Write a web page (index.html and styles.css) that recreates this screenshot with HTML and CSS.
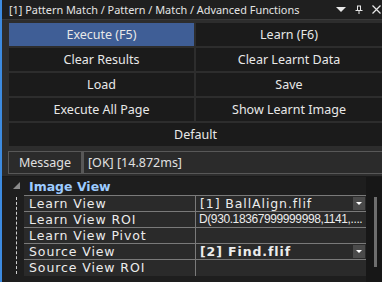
FILE: index.html
```html
<!DOCTYPE html>
<html lang="en">
<head>
    <meta charset="UTF-8">
    <title>Pattern Match</title>
    <link rel="stylesheet" href="styles.css">
</head>
<body>
    <div class="frame">
        <div class="titlebar">
            <span class="title">[1] Pattern Match / Pattern / Match / Advanced Functions</span>
            <div class="title-icons">
                <svg width="10" height="6" viewBox="0 0 10 6"><path d="M0 0 L10 0 L5 5 Z" fill="#e8e8e8"/></svg>
                <svg width="8" height="9" viewBox="0 0 8 9"><path d="M2 0.5 H6 V5 H7.5 V6 H4.5 V9 H3.5 V6 H0.5 V5 H2 Z M3 1.5 V5 H5 V1.5 Z" fill="#e8e8e8"/></svg>
                <svg width="9" height="9" viewBox="0 0 9 9"><path d="M0.5 0.5 L8.5 8.5 M8.5 0.5 L0.5 8.5" stroke="#e8e8e8" stroke-width="1.2"/></svg>
            </div>
        </div>

        <div class="buttons">
            <button class="btn active">Execute (F5)</button>
            <button class="btn">Learn (F6)</button>
            <button class="btn">Clear Results</button>
            <button class="btn">Clear Learnt Data</button>
            <button class="btn">Load</button>
            <button class="btn">Save</button>
            <button class="btn">Execute All Page</button>
            <button class="btn">Show Learnt Image</button>
            <button class="btn wide">Default</button>
        </div>

        <div class="message">
            <div class="msg-label">Message</div>
            <div class="msg-value">[OK] [14.872ms]</div>
        </div>

        <div class="grid-area">
            <div class="props">
                <div class="category">
                    <span class="tri"></span>
                    <span class="cat-name">Image View</span>
                </div>
                <div class="rows">
                    <div class="tree-line"></div>
                    <div class="table">
                        <div class="row">
                            <div class="name">Learn View</div>
                            <div class="value"><span class="val-text">[1] BallAlign.flif</span><span class="drop"></span></div>
                        </div>
                        <div class="row">
                            <div class="name">Learn View ROI</div>
                            <div class="value"><span class="val-text narrow">D(930.18367999999998,1141,....</span></div>
                        </div>
                        <div class="row">
                            <div class="name">Learn View Pivot</div>
                            <div class="value"></div>
                        </div>
                        <div class="row">
                            <div class="name">Source View</div>
                            <div class="value bold"><span class="val-text">[2] Find.flif</span><span class="drop"></span></div>
                        </div>
                        <div class="row">
                            <div class="name">Source View ROI</div>
                            <div class="value"></div>
                        </div>
                    </div>
                </div>
                <div class="category next">
                    <span class="tri"></span>
                    <span class="cat-name">Parameters</span>
                </div>
            </div>
            <div class="scrollbar">
                <div class="thumb"></div>
            </div>
        </div>
    </div>
</body>
</html>
```

FILE: styles.css
```css
/* Pattern match panel */
body {
    margin: 0;
    background-color: #2d2d2d;
    font-family: 'Noto Sans', sans-serif;
    overflow: hidden;
}

.frame {
    width: 380px;
    height: 282px;
    border-left: 2px solid #3d8be0;
    background-color: #2d2d2d;
    overflow: hidden;
}

.titlebar {
    height: 20px;
    background-color: #1f1f1f;
    border-bottom: 1px solid #3a3a3a;
    display: flex;
    align-items: center;
    justify-content: space-between;
    padding-left: 7px;
    box-sizing: border-box;
}

.title {
    color: #e4e4e4;
    font-size: 10.9px;
}

.title-icons {
    display: flex;
    align-items: center;
    gap: 9px;
    padding-right: 1px;
}

.buttons {
    display: grid;
    grid-template-columns: 185px 1fr;
    gap: 2px;
    margin: 3px 0 0 7px;
}

.btn {
    height: 23px;
    border: none;
    margin: 0;
    padding: 0;
    background-color: #1b1b1b;
    color: #e8e8e8;
    font-family: 'Noto Sans', sans-serif;
    font-size: 12.5px;
}

.btn.active {
    background-color: #3f5e96;
}

.btn.wide {
    grid-column: 1 / 3;
}

.message {
    display: flex;
    height: 23px;
    margin: 5px 0 0 6px;
    color: #e0e0e0;
    font-size: 12.5px;
}

.msg-label {
    width: 74px;
    border: 1px solid #585858;
    background-color: #2b2b2b;
    display: flex;
    align-items: center;
    justify-content: center;
    box-sizing: border-box;
}

.msg-value {
    flex: 1;
    border: 1px solid #585858;
    border-right: none;
    border-left-width: 2px;
    background-color: #2b2b2b;
    display: flex;
    align-items: center;
    padding-left: 4px;
    box-sizing: border-box;
}

.grid-area {
    display: flex;
    margin-top: 2px;
    border-top: 1px solid #1a1a1a;
    background-color: #1e1e1e;
    height: 120px;
}

.props {
    width: 364px;
    flex-shrink: 0;
    font-family: 'DejaVu Sans', sans-serif;
}

.category {
    height: 18px;
    display: flex;
    align-items: center;
    position: relative;
}

.cat-name {
    margin-left: 27px;
    color: #9ccbff;
    font-weight: bold;
    font-size: 12.5px;
}

.tri {
    position: absolute;
    left: 11px;
    top: 5px;
    width: 0;
    height: 0;
    border-left: 7px solid transparent;
    border-bottom: 7px solid #8a8a8a;
}

.category.next {
    margin-top: 2px;
}

.rows {
    display: flex;
}

.tree-line {
    width: 22px;
    flex-shrink: 0;
    position: relative;
}

.tree-line::before {
    content: '';
    position: absolute;
    left: 14px;
    top: 2px;
    bottom: 2px;
    border-left: 1px dashed #cfcfcf;
}

.table {
    flex: 1;
    min-width: 0;
    border-top: 1px solid #7a7a7a;
}

.row {
    display: flex;
    height: 15px;
    border-bottom: 1px solid #7a7a7a;
    background-color: #2a2a2a;
    color: #ececec;
    font-size: 12.5px;
    line-height: 15px;
    letter-spacing: 0.9px;
}

.row:last-child {
    border-bottom: none;
    height: 16px;
}

.name {
    width: 172px;
    flex-shrink: 0;
    padding-left: 5px;
    border-right: 1px solid #7a7a7a;
    box-sizing: border-box;
}

.value {
    flex: 1;
    min-width: 0;
    padding-left: 4px;
    position: relative;
    display: flex;
}

.val-text {
    white-space: nowrap;
    overflow: hidden;
}

.val-text.narrow {
    font-family: 'Liberation Sans', sans-serif;
    font-size: 12px;
    letter-spacing: -0.4px;
    margin-left: -1px;
}

.value.bold {
    font-weight: bold;
}

.drop {
    position: absolute;
    right: 1px;
    top: 1px;
    width: 12px;
    height: 13px;
    background-color: #4a4a4a;
}

.drop::after {
    content: '';
    position: absolute;
    left: 3px;
    top: 5px;
    border-left: 3px solid transparent;
    border-right: 3px solid transparent;
    border-top: 3px solid #ffffff;
}

.scrollbar {
    flex: 1;
    background-color: #171717;
    position: relative;
}

.thumb {
    position: absolute;
    left: 8px;
    top: 20px;
    width: 3px;
    height: 70px;
    background-color: #6e6e6e;
}
```
